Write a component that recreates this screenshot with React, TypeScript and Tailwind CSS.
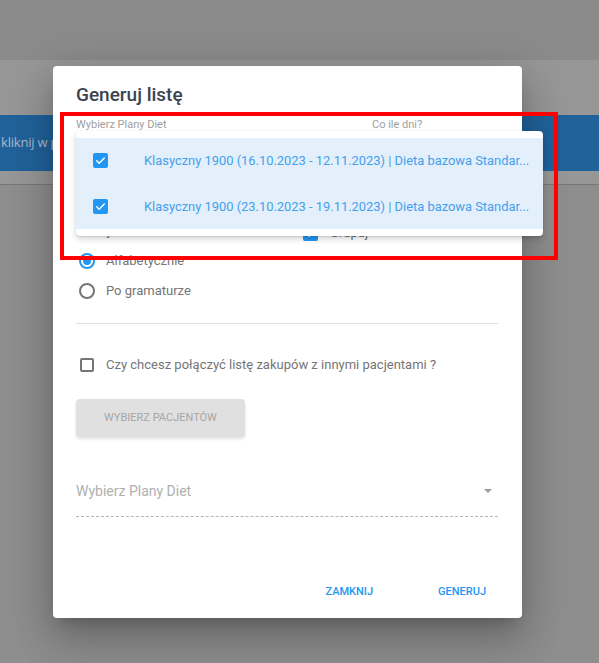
import React from "react";

const PLANS = [
  "Klasyczny 1900 (16.10.2023 - 12.11.2023) | Dieta bazowa Standar...",
  "Klasyczny 1900 (23.10.2023 - 19.11.2023) | Dieta bazowa Standar...",
];

const CheckMark = () => (
  <svg viewBox="0 0 24 24" className="w-[13px] h-[13px]" fill="none">
    <path
      d="M5 12.5l4.5 4.5L19 7.5"
      stroke="white"
      strokeWidth="2.6"
      strokeLinecap="round"
      strokeLinejoin="round"
    />
  </svg>
);

const CheckedBox = () => (
  <span className="w-[15px] h-[15px] rounded-[2px] bg-[#2196f3] flex items-center justify-center shrink-0">
    <CheckMark />
  </span>
);

const Radio = ({ checked, label }: { checked?: boolean; label: string }) => (
  <div className="h-[30px] flex items-center">
    <span
      className={`ml-[3px] w-[16px] h-[16px] rounded-full border-2 flex items-center justify-center ${
        checked ? "border-[#2196f3]" : "border-[#757575]"
      }`}
    >
      {checked && <span className="w-[8px] h-[8px] rounded-full bg-[#2196f3]" />}
    </span>
    <span className="ml-[11px] text-[13px] text-[#757575]">{label}</span>
  </div>
);

const App = () => {
  return (
    <div className="relative w-[599px] h-[663px] overflow-hidden bg-[#8e8e8e] font-['Roboto',sans-serif]">
      {/* page behind the backdrop */}
      <div className="flex flex-col">
        <div className="h-[60px] bg-[#8b8b8b]" />
        <div className="h-[55px] bg-[#979797]" />
        <div className="h-[56px] bg-[#21629a] flex items-center">
          <span className="pl-[1px] text-[13px] text-[#a9bccd] font-['Open_Sans',sans-serif] whitespace-nowrap tracking-[-0.2px]">
            kliknij w pole poniżej
          </span>
        </div>
        <div className="h-[14px] bg-[#979797] border-b border-[#777]" />
      </div>

      {/* dialog */}
      <div className="absolute left-[53px] top-[66px] w-[469px] h-[552px] bg-white rounded-[4px] shadow-[0_11px_15px_-7px_rgba(0,0,0,0.2),0_24px_38px_3px_rgba(0,0,0,0.14),0_9px_46px_8px_rgba(0,0,0,0.12)] flex flex-col pl-[23px] pr-[24px] pt-[15px]">
        <h2 className="h-[28px] leading-[28px] text-[19px] font-medium text-[#3b4350]">
          Generuj listę
        </h2>

        <div className="mt-[8px] grid grid-cols-[296px_1fr]">
          <div>
            <p className="text-[11px] leading-[16px] text-[#9e9e9e]">Wybierz Plany Diet</p>
            <div className="h-[32px] border-b border-[#bdbdbd]" />
          </div>
          <div>
            <p className="text-[11px] leading-[16px] text-[#9e9e9e]">Co ile dni?</p>
            <div className="h-[32px] border-b border-[#bdbdbd]" />
          </div>
        </div>

        <div className="mt-[56px] h-[24px] grid grid-cols-[227px_1fr] items-center">
          <span className="self-start mt-[2px] text-[13px] leading-[15px] text-[#757575]">Sortuj</span>
          <div className="flex items-center">
            <CheckedBox />
            <span className="ml-[12px] text-[13px] text-[#757575]">Grupuj</span>
          </div>
        </div>

        <div className="mt-[1px] flex flex-col">
          <Radio checked label="Alfabetycznie" />
          <Radio label="Po gramaturze" />
        </div>

        <div className="mt-[17px] h-px bg-[#e0e0e0]" />

        <div className="mt-[26px] h-[30px] flex items-center">
          <span className="ml-[4px] w-[14px] h-[14px] rounded-[2px] border-2 border-[#757575]" />
          <span className="ml-[12px] text-[13px] text-[#757575]">
            Czy chcesz połączyć listę zakupów z innymi pacjentami ?
          </span>
        </div>

        <button
          disabled
          className="mt-[19px] w-[169px] h-[38px] rounded-[4px] bg-[#e0e0e0] shadow-[0_2px_3px_rgba(0,0,0,0.12)] text-[11px] text-[#a6a6a6]"
        >
          WYBIERZ PACJENTÓW
        </button>

        <div className="mt-[44px] h-[20px] flex items-center justify-between">
          <span className="text-[14px] text-[#b0b0b0]">Wybierz Plany Diet</span>
          <span className="mr-[6px] w-0 h-0 border-l-[4px] border-r-[4px] border-t-[4px] border-l-transparent border-r-transparent border-t-[#9e9e9e]" />
        </div>
        <div className="mt-[15px] border-b border-dashed border-[#b5b5b5]" />

        <div className="mt-auto mb-[8px] h-[36px] flex justify-end gap-[33px] -mr-[4px]">
          <button className="px-[16px] text-[11px] font-medium text-[#2196f3]">ZAMKNIJ</button>
          <button className="px-[16px] text-[11px] font-medium text-[#2196f3]">GENERUJ</button>
        </div>
      </div>

      {/* open multi-select menu */}
      <div className="absolute left-[76px] top-[131px] w-[467px] bg-white rounded-[4px] py-[7px] shadow-[0_3px_6px_rgba(0,0,0,0.16),0_1px_2px_rgba(0,0,0,0.1)]">
        {PLANS.map((plan) => (
          <div
            key={plan}
            className="h-[45.5px] bg-[#e3effa] flex items-center pl-[17px] pr-[12px]"
          >
            <CheckedBox />
            <span className="ml-[36px] text-[12.9px] text-[#45a0ec] whitespace-nowrap">{plan}</span>
          </div>
        ))}
      </div>

      {/* annotation frame */}
      <div className="absolute left-[60px] top-[112px] w-[498px] h-[148px] border-[4px] border-[#ff0000] pointer-events-none" />
    </div>
  );
};

export default App;
